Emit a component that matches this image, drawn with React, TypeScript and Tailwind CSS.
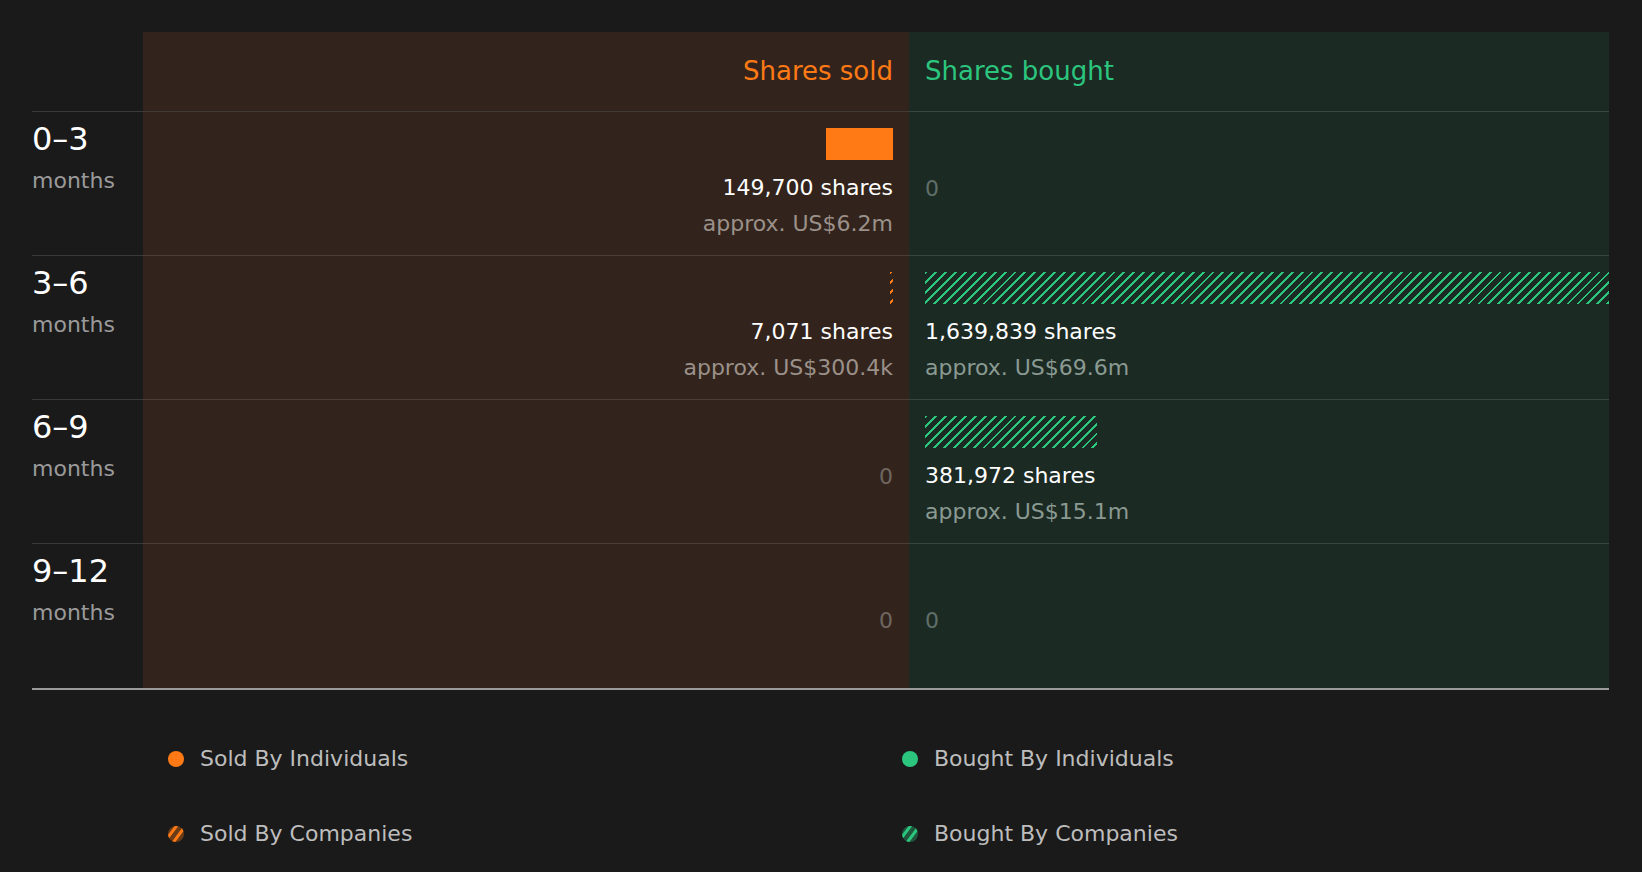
const F = { fontFamily: '"DejaVu Sans", sans-serif' };

const orangeHatch =
  'bg-[repeating-linear-gradient(135deg,#ff7a15_0px,#ff7a15_2px,transparent_2px,transparent_7px)]';

type Side = { shares?: string; approx?: string; bar?: number; hatched?: boolean };
const rows: { label: string; sold: Side; bought: Side }[] = [
  { label: '0–3', sold: { shares: '149,700 shares', approx: 'approx. US$6.2m', bar: 67 }, bought: {} },
  { label: '3–6', sold: { shares: '7,071 shares', approx: 'approx. US$300.4k', bar: 3, hatched: true }, bought: { shares: '1,639,839 shares', approx: 'approx. US$69.6m', bar: 684, hatched: true } },
  { label: '6–9', sold: {}, bought: { shares: '381,972 shares', approx: 'approx. US$15.1m', bar: 172, hatched: true } },
  { label: '9–12', sold: {}, bought: {} },
];

function Cell({ d, sold }: { d: Side; sold: boolean }) {
  const align = sold ? 'items-end pr-4' : 'items-start pl-4';
  if (!d.shares) {
    return (
      <div className={`flex flex-col ${align} ${sold ? 'bg-[#32241c]' : 'bg-[#1c2a24]'} pt-[60px]`}>
        <span className={`text-[22px] ${sold ? 'text-[#6f6660]' : 'text-[#5f6f67]'}`}>0</span>
      </div>
    );
  }
  const barCls = sold
    ? d.hatched ? orangeHatch : 'bg-[#ff7a15]'
    : 'bg-[repeating-linear-gradient(135deg,#2bc57e_0px,#2bc57e_2px,transparent_2px,transparent_7px)]';
  return (
    <div className={`flex flex-col ${align} ${sold ? 'bg-[#32241c]' : 'bg-[#1c2a24]'} pt-4`}>
      <div className={`h-8 ${barCls}`} style={{ width: d.bar }} />
      <span className="mt-[14px] text-[22px] leading-[28px] text-white">{d.shares}</span>
      <span className={`mt-[8px] text-[22px] leading-[28px] ${sold ? 'text-[#9b918a]' : 'text-[#8a9a92]'}`}>{d.approx}</span>
    </div>
  );
}

function Legend({ color, text, hatch }: { color: string; text: string; hatch?: boolean }) {
  return (
    <div className="flex items-center gap-4">
      {hatch ? (
        <svg width="16" height="16" viewBox="0 0 16 16">
          <clipPath id={`c${color}`}><circle cx="8" cy="8" r="8" /></clipPath>
          <g clipPath={`url(#c${color})`}>
            <rect width="16" height="16" fill={color} opacity="0.35" />
            <path d="M-2 14 L10 -2 M4 18 L16 2" stroke={color} strokeWidth="3" />
          </g>
        </svg>
      ) : (
        <span className="h-4 w-4 rounded-full" style={{ background: color }} />
      )}
      <span className="text-[22px] text-[#bdbdbd]">{text}</span>
    </div>
  );
}

export default function App() {
  return (
    <div className="min-h-screen bg-[#1a1a1a] px-8 pt-8" style={F}>
      <div className="grid grid-cols-[111px_766px_700px]">
        <div className="border-b border-[#3a3a3a]" />
        <div className="flex h-[80px] items-center justify-end border-b border-[#3f3a36] bg-[#32241c] pr-4 text-[26px] text-[#ff7a15]">Shares sold</div>
        <div className="flex h-[80px] items-center border-b border-[#3a4640] bg-[#1c2a24] pl-4 text-[26px] text-[#2bc57e]">Shares bought</div>
        {rows.map((r, i) => (
          <div key={r.label} className="contents">
            <div className={`h-[144px] pt-[8px] ${i < 3 ? 'border-b border-[#3a3a3a]' : ''} flex flex-col`}>
              <span className="text-[32px] leading-[38px] text-white">{r.label}</span>
              <span className="mt-[6px] text-[22px] text-[#9a9a9a]">months</span>
            </div>
            <div className={`h-[144px] ${i < 3 ? 'border-b border-[#4a3e36]' : ''} grid`}><Cell d={r.sold} sold /></div>
            <div className={`h-[144px] ${i < 3 ? 'border-b border-[#37463f]' : ''} grid`}><Cell d={r.bought} sold={false} /></div>
          </div>
        ))}
      </div>
      <div className="h-[2px] w-[1577px] bg-[#9a9a9a]" />
      <div className="ml-[136px] mt-[52px] grid grid-cols-[734px_1fr] gap-y-[42px]">
        <Legend color="#ff7a15" text="Sold By Individuals" />
        <Legend color="#2bc57e" text="Bought By Individuals" />
        <Legend color="#ff7a15" text="Sold By Companies" hatch />
        <Legend color="#2bc57e" text="Bought By Companies" hatch />
      </div>
    </div>
  );
}
